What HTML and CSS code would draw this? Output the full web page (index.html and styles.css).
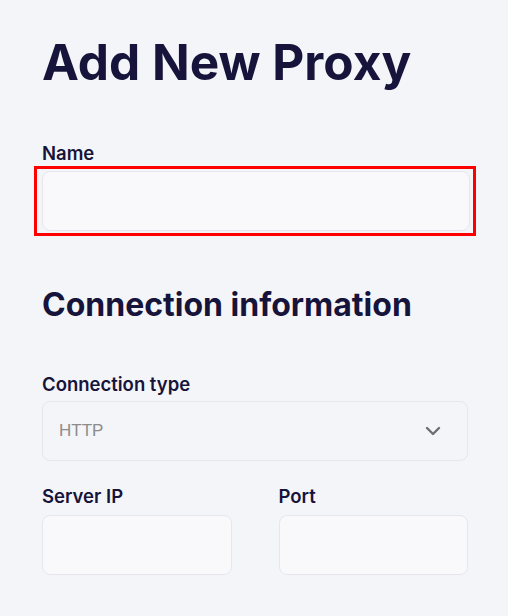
FILE: index.html
```html
<!DOCTYPE html>
<html lang="en">
<head>
  <meta charset="UTF-8">
  <meta name="viewport" content="width=device-width, initial-scale=1.0">
  <title>Add New Proxy</title>
  <link rel="stylesheet" href="styles.css">
</head>
<body>
  <form class="proxy-form">
    <h1>Add New Proxy</h1>

    <label class="field-label" for="proxyName">Name</label>
    <div class="highlight">
      <input type="text" id="proxyName" class="text-input">
    </div>

    <h2>Connection information</h2>

    <label class="field-label" for="connType">Connection type</label>
    <div class="select-box">
      <span class="select-value">HTTP</span>
      <svg class="chevron" width="16" height="10" viewBox="0 0 16 10">
        <path d="M2 2 L8 8 L14 2" fill="none" stroke="#6e6e75" stroke-width="2.4" stroke-linecap="round" stroke-linejoin="round"/>
      </svg>
    </div>

    <div class="row">
      <div class="col">
        <label class="field-label" for="serverIp">Server IP</label>
        <input type="text" id="serverIp" class="text-input">
      </div>
      <div class="col">
        <label class="field-label" for="port">Port</label>
        <input type="text" id="port" class="text-input">
      </div>
    </div>
  </form>
</body>
</html>
```

FILE: styles.css
```css
body {
  font-family: Inter, "Noto Sans", sans-serif;
  background-color: #f4f5f9;
  color: #16143a;
  margin: 0;
  padding: 0;
}

.proxy-form {
  width: 426px;
  padding: 30px 0 0 42px;
}

h1 {
  font-size: 49.5px;
  font-weight: 700;
  line-height: 64px;
  margin: 0 0 49px;
}

h2 {
  font-size: 32px;
  font-weight: 700;
  line-height: 40px;
  margin: 49px 0 49px;
}

.field-label {
  display: block;
  font-size: 18.5px;
  font-weight: 600;
  line-height: 20px;
  margin-bottom: 7px;
}

.row .field-label {
  margin-bottom: 9px;
}

.text-input {
  display: block;
  box-sizing: border-box;
  width: 100%;
  height: 60px;
  background-color: #f9f9fc;
  border: 1px solid #e6e7ec;
  border-radius: 8px;
  outline: none;
}

/* red marker round the name field */
.highlight {
  margin: -4px 0 0 -8px;
  width: 442px;
  border: 3px solid #ff0000;
  padding: 2px 3px 2px 5px;
  box-sizing: border-box;
}

.select-box {
  display: flex;
  align-items: center;
  justify-content: space-between;
  box-sizing: border-box;
  height: 60px;
  padding: 0 26px 0 16px;
  background-color: #f4f5f9;
  border: 1px solid #e6e7ec;
  border-radius: 8px;
  margin-bottom: 25px;
}

.select-value {
  font-family: "Liberation Sans", Arial, sans-serif;
  font-size: 17px;
  color: #8c8c8c;
}

.row {
  display: flex;
  gap: 47px;
}

.col {
  flex: 1;
}
```
